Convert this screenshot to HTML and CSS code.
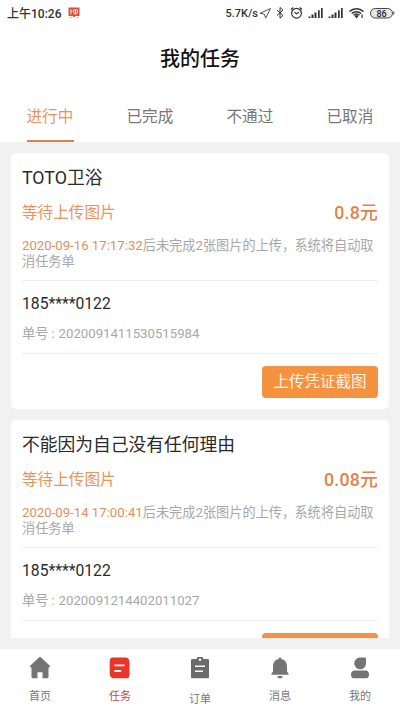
FILE: index.html
```html
<!DOCTYPE html>
<html lang="zh-CN">
<head>
<meta charset="utf-8">
<title>我的任务</title>
<link rel="stylesheet" href="styles.css">
</head>
<body>
<div class="status-bar">
  <span class="clock">上午10:26</span>
  <svg class="app-badge" width="12" height="12" viewBox="0 0 12 12"><path fill="#dc4f3d" d="M.5.5h11V9H7.500L6 10.500 4.500 9h-4z"/><path fill="none" stroke="#fbe3de" stroke-width=".9" d="M3 2.500v5M2 4h2.500M5.500 3h4v3h-4zM7.500 2v6"/><path fill="none" stroke="#e9a08f" d="M1.500 10.500h2M8.500 10.500h2"/></svg>
  <span class="speed">5.7K/s</span>
  <svg class="status-icons" width="136" height="16" viewBox="0 0 136 16">
    <g fill="none" stroke="#555" stroke-width="1">
      <path d="M11.500 3.500 1 8.300l4.200.8 1.500 4z"/>
      <path stroke="#333" d="M18 5.200l6 5.300-3 2.700V2.500l3 2.700-6 5.300"/>
      <circle cx="37.500" cy="8.200" r="4.900" stroke="#333" stroke-width="1.200"/>
      <path stroke="#333" stroke-width="1.200" d="M32 4.500l2.300-2M43 4.500l-2.300-2M35.500 7.300l2 1.500 2.500-1.500"/>
    </g>
    <g fill="#333">
      <path d="M49.500 11.500h2V13h-2zM52.500 9.500h2V13h-2zM55.500 7.500h2V13h-2zM59 5.200h1.700V13H59zM62 3h1.700v10H62z"/>
      <path d="M69.500 11.500h2V13h-2zM72.500 9.500h2V13h-2zM75.500 7.500h2V13h-2zM79 5.200h1.700V13H79zM82 3h1.700v10H82z"/>
      <path d="M95.500 11l2 2.500 2-2.500a3 3 0 0 0-4 0zM102.500 9.500h1.200V13h-1.200z"/>
    </g>
    <path fill="none" stroke="#333" stroke-width="1.500" d="M90.500 6.500a10 10 0 0 1 14 0M92.700 8.500a7 7 0 0 1 9.500 0M94.500 10.300a4.500 4.500 0 0 1 6 0"/>
    <rect x="111.500" y="3.500" width="22" height="9.500" rx="4.700" fill="#e6e6e6" stroke="#444"/>
    <path stroke="#444" d="M134.800 6.500v3"/>
    <text class="battery-text" x="122.500" y="11.600" text-anchor="middle">86</text>
  </svg>
</div>
<h1 class="page-title">我的任务</h1>
<nav class="tabs">
  <a class="tab active">进行中</a>
  <a class="tab">已完成</a>
  <a class="tab">不通过</a>
  <a class="tab">已取消</a>
</nav>
<main class="task-list">
  <article class="card">
    <h2 class="card-title">TOTO卫浴</h2>
    <div class="state"><span>等待上传图片</span><strong class="price">0.8元</strong></div>
    <p class="notice"><span class="deadline">2020-09-16 17:17:32</span>后未完成2张图片的上传<span class="comma">，</span>系统将自动取消任务单</p>
    <div class="order">
      <div class="phone">185****0122</div>
      <div class="number">单号<span class="colon">:</span>2020091411530515984</div>
    </div>
    <div class="actions"><button class="upload">上传凭证截图</button></div>
  </article>
  <article class="card">
    <h2 class="card-title">不能因为自己没有任何理由</h2>
    <div class="state"><span>等待上传图片</span><strong class="price">0.08元</strong></div>
    <p class="notice"><span class="deadline">2020-09-14 17:00:41</span>后未完成2张图片的上传<span class="comma">，</span>系统将自动取消任务单</p>
    <div class="order">
      <div class="phone">185****0122</div>
      <div class="number">单号<span class="colon">:</span>2020091214402011027</div>
    </div>
    <div class="actions"><button class="upload" aria-label="上传凭证截图"></button></div>
  </article>
</main>
<nav class="bottom-nav">
  <a class="nav-item"><svg width="22" height="22" viewBox="0 0 22 22"><path fill="#747474" d="M9.800.5a1.800 1.800 0 0 1 2.400 0l8.600 8.300c.7.700.4 1.400-.5 1.400h-.8v9.600c0 1-.6 1.500-1.500 1.500h-4.500v-6h-5v6H4c-1 0-1.500-.5-1.500-1.500v-9.600h-.8c-.9 0-1.200-.7-.5-1.400z"/></svg><span>首页</span></a>
  <a class="nav-item current"><svg width="22" height="22" viewBox="0 0 22 22"><path fill="#ea3429" d="M4 .5h12.500c2.500 0 4 2 4 4.500v13.200c0 2-1 3.100-3 3.100H5c-2.800 0-4.300-1.800-4.300-4.500V4C.7 1.700 1.800.5 4 .5z"/><path stroke="#fff" stroke-width="1.800" stroke-linecap="round" d="M6 8.300h9M6 14h5.500"/></svg><span>任务</span></a>
  <a class="nav-item orders"><svg width="22" height="22" viewBox="0 0 22 22"><path fill="#6b6b6b" d="M3.500 2h4a3.600 3.600 0 0 1 7 0h4c1 0 1.500.6 1.500 1.500v16.300c0 1-.5 1.500-1.500 1.500h-15c-1 0-1.500-.5-1.500-1.500V3.500C2 2.600 2.500 2 3.500 2z"/><circle cx="11" cy="2.700" r="1.200" fill="#fff"/><path stroke="#fff" stroke-width="1.600" d="M6 9.300h10M6 14.200h8"/></svg><span>订单</span></a>
  <a class="nav-item"><svg width="22" height="22" viewBox="0 0 22 22"><path fill="#747474" d="M9.500 2a1.500 1.500 0 0 1 3 0c3.800 1 5.500 3.800 5.500 7.500v5l1.500 2v1.300h-17v-1.300l1.500-2v-5C4 5.800 5.700 3 9.500 2zM8.500 19h5a2.500 2.500 0 0 1-5 0z"/></svg><span>消息</span></a>
  <a class="nav-item"><svg width="22" height="22" viewBox="0 0 22 22"><path fill="#747474" d="M11.500.5h4c1 0 1.500.5 1.500 1.500v4.500a5.900 5.900 0 1 1-5.500-6z"/><rect x="2" y="13.500" width="18" height="7.800" rx="3.900" fill="#747474"/></svg><span>我的</span></a>
</nav>
</body>
</html>
```
FILE: styles.css
```css
* { box-sizing: border-box; }

body {
  margin: 0;
  width: 400px;
  height: 711px;
  overflow: hidden;
  display: flex;
  flex-direction: column;
  background: #f1f1f1;
  font-family: Roboto, "Noto Sans CJK SC", sans-serif;
  font-weight: 400;
}

.status-bar {
  height: 28px;
  padding: 0 5px 0 7px;
  background: #fff;
  color: #333;
  display: flex;
  align-items: center;
  flex-shrink: 0;
}
.clock { font-size: 12px; font-weight: 500; line-height: 26px; }
.app-badge { margin-left: 7px; margin-top: -3px; }
.speed { margin-left: auto; font-size: 11px; font-weight: 500; line-height: 26px; }
.status-icons { margin-left: 1px; margin-top: -2px; }
.battery-text { font-size: 9px; font-weight: 500; fill: #222; }

.page-title {
  margin: 0;
  height: 62px;
  background: #fff;
  color: #111;
  font-size: 20px;
  font-weight: 500;
  line-height: 63px;
  text-align: center;
  flex-shrink: 0;
}

.tabs {
  height: 52px;
  background: #fff;
  display: flex;
  justify-content: space-around;
  flex-shrink: 0;
}
.tab {
  width: 47px;
  height: 52px;
  color: #777;
  font-size: 15.600px;
  line-height: 54px;
  white-space: nowrap;
}
.tab.active { color: #e89360; border-bottom: 2px solid #dc8050; }

.task-list {
  margin: 11px 11px;
  display: flex;
  flex-direction: column;
  gap: 11px;
  flex: 0 0 485px;
  overflow: hidden;
}
.card {
  height: 256px;
  padding: 0 11px;
  background: #fff;
  border-radius: 5px;
  flex-shrink: 0;
}
.card-title {
  margin: 0;
  padding-top: 11px;
  color: #2a2a2a;
  font-size: 17.750px;
  font-weight: 400;
  line-height: 28px;
}
.state {
  margin-top: 7px;
  height: 28px;
  display: flex;
  justify-content: space-between;
  color: #e89360;
  font-size: 15.600px;
  line-height: 28px;
}
.price { color: #e0824a; font-size: 17.800px; font-weight: 500; letter-spacing: .2px; }
.notice {
  margin: 10px 0 0;
  height: 44px;
  padding-top: 1px;
  color: #a8a8a8;
  font-size: 13.200px;
  line-height: 15.500px;
  border-bottom: 1px solid #eee;
}
.deadline { color: #e0905f; }
.comma { letter-spacing: -.8px; }
.order {
  height: 73px;
  border-bottom: 1px solid #eee;
}
.phone {
  padding-top: 11px;
  color: #2a2a2a;
  font-size: 15.700px;
  line-height: 24px;
}
.number {
  margin-top: 8px;
  color: #a8a8a8;
  font-size: 13.200px;
  line-height: 20px;
}
.colon { margin: 0 4px 0 3px; }
.actions {
  padding-top: 12px;
  display: flex;
  justify-content: flex-end;
}
.upload {
  width: 116px;
  height: 32px;
  padding: 1px 0 0;
  border: 0;
  border-radius: 4px;
  background: #f5923f;
  color: #fff3e6;
  font: inherit;
  font-size: 15.500px;
  line-height: 31px;
}

.bottom-nav {
  height: 62px;
  background: #fff;
  display: flex;
  flex-shrink: 0;
}
.nav-item {
  flex: 1;
  padding-top: 8px;
  display: flex;
  flex-direction: column;
  align-items: center;
  gap: 9px;
  color: #777;
  font-size: 11px;
  line-height: 18px;
}
.nav-item.current { color: #c9453c; }
.nav-item.orders { gap: 12px; }
```
